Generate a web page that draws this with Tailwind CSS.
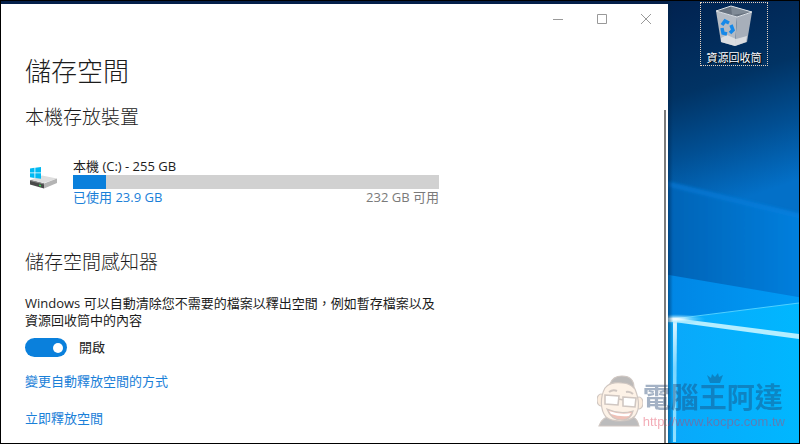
<!DOCTYPE html>
<html lang="zh-Hant">
<head>
  <meta charset="UTF-8">
  <title>儲存空間</title>
  <meta name="viewport" content="width=device-width, initial-scale=1.0"/>
  <script src="https://cdn.jsdelivr.net/npm/@tailwindcss/browser@4"></script>
</head>
<body class="relative flex h-screen overflow-hidden border border-black bg-[#04204a] font-['Open_Sans','Noto_Sans_CJK_TC',sans-serif] text-[13px] leading-[17px] text-[#1c1c1c]">

  <!-- Settings window -->
  <main class="relative mt-[3px] flex-1 overflow-hidden bg-white">
    <!-- Caption buttons -->
    <div class="flex h-[30px] justify-end text-[#999]">
      <button type="button" aria-label="最小化" class="flex w-11 items-center justify-center">
        <svg class="size-3" viewBox="0 0 12 12" fill="none" stroke="currentColor"><path d="M1 6.500h10"/></svg>
      </button>
      <button type="button" aria-label="最大化" class="flex w-11 items-center justify-center">
        <svg class="size-3" viewBox="0 0 12 12" fill="none" stroke="currentColor"><path d="M1.500 1.500h9v9h-9z"/></svg>
      </button>
      <button type="button" aria-label="關閉" class="flex w-11 items-center justify-center">
        <svg class="size-3" viewBox="0 0 12 12" fill="none" stroke="currentColor"><path d="M1 1l10 10M11 1L1 11"/></svg>
      </button>
    </div>

    <div class="px-6">
      <h1 class="mt-[17px] text-[26px] leading-10 font-light">儲存空間</h1>
      <h2 class="mt-3 text-[19px] leading-7 font-light">本機存放裝置</h2>

      <!-- Drive usage -->
      <section class="mt-[27px] flex w-[414px] gap-4">
        <svg class="mt-2 ml-1 h-7 w-7 shrink-0" viewBox="0 0 28 28">
          <path fill="#dedede" d="M1 14L13 9.500 28 12.500 15 17z"/>
          <path fill="#4a4a4a" d="M1 14l14 3.500v5L1 18.500z"/>
          <path fill="#b4b4b4" d="M15 17.500l13-5v4.500L15 22.500z"/>
          <path fill="#8a8a8a" d="M1 14l14 3.500v1L1 15z"/>
          <path fill="#39d353" d="M10 18.500l2 .6v1.400l-2-.6z"/>
          <path fill="#00b9f2" d="M1 2.500l4.500-.7v4.700H1zM6.300 1.700L12 .9v5.600H6.300zM1 7.300h4.500V12L1 11.300zM6.300 7.300H12v5.500l-5.700-.7z"/>
        </svg>
        <div class="flex-1">
          <label for="usage" class="block">本機 (C:) - 255 GB</label>
          <progress id="usage" value="9" max="100" class="block h-3.5 w-full appearance-none [&::-webkit-progress-bar]:bg-[#d1d1d1] [&::-webkit-progress-value]:bg-[#0a80dc]"></progress>
          <div class="flex justify-between">
            <a href="#" class="text-[#1a80d8]">已使用 23.9 GB</a>
            <span class="text-[#7a7a7a]">232 GB 可用</span>
          </div>
        </div>
      </section>

      <!-- Storage sense -->
      <h2 class="mt-[42px] text-[19px] leading-7 font-light">儲存空間感知器</h2>
      <p class="mt-[19px] whitespace-nowrap">Windows 可以自動清除您不需要的檔案以釋出空間，例如暫存檔案以及<br>資源回收筒中的內容</p>
      <label class="mt-[9px] flex items-center gap-3">
        <input type="checkbox" role="switch" checked class="flex h-[19px] w-[42px] appearance-none items-center justify-end rounded-full bg-[#0a80dc] px-1 before:size-2.5 before:rounded-full before:bg-white">
        開啟
      </label>
      <a href="#" class="mt-4 block text-[#1a80d8]">變更自動釋放空間的方式</a>
      <a href="#" class="mt-5 block text-[#1a80d8]">立即釋放空間</a>
    </div>

    <!-- Scrollbar thumb -->
    <div class="absolute top-[106px] right-0.5 bottom-0 w-0.5 bg-[#7c7c7c]"></div>
  </main>

  <!-- Desktop -->
  <aside class="relative w-[131px] overflow-hidden">
    <svg class="absolute inset-0 size-full" viewBox="0 0 131 442" preserveAspectRatio="none">
      <defs>
        <linearGradient id="sky" x1="0" y1="0" x2="0.1" y2="1">
          <stop offset="0" stop-color="#012250"/>
          <stop offset="0.22" stop-color="#013364"/>
          <stop offset="0.36" stop-color="#014f93"/>
          <stop offset="0.5" stop-color="#0370c8"/>
        </linearGradient>
        <linearGradient id="beam" x1="0" y1="0" x2="1" y2="0">
          <stop offset="0" stop-color="#0262b4"/>
          <stop offset="1" stop-color="#0580df"/>
        </linearGradient>
        <linearGradient id="low" x1="0" y1="0" x2="1" y2="0">
          <stop offset="0" stop-color="#0585e4"/>
          <stop offset="1" stop-color="#019cf6"/>
        </linearGradient>
        <linearGradient id="pane" x1="0" y1="0" x2="1" y2="0">
          <stop offset="0" stop-color="#0aa8fa"/>
          <stop offset="1" stop-color="#00b7ff"/>
        </linearGradient>
        <linearGradient id="post" x1="0" y1="0" x2="0" y2="1">
          <stop offset="0" stop-color="#e2f8ff"/>
          <stop offset="0.4" stop-color="#7bd6ff"/>
          <stop offset="1" stop-color="#8fe0ff"/>
        </linearGradient>
        <linearGradient id="edge" x1="0" y1="0" x2="1" y2="0">
          <stop offset="0" stop-color="#002348" stop-opacity="0.5"/>
          <stop offset="1" stop-color="#002348" stop-opacity="0"/>
        </linearGradient>
        <radialGradient id="glow">
          <stop offset="0" stop-color="#fff"/>
          <stop offset="0.3" stop-color="#d8f6ff" stop-opacity="0.8"/>
          <stop offset="1" stop-color="#5cd0ff" stop-opacity="0"/>
        </radialGradient>
        <filter id="soft" x="-20%" y="-20%" width="140%" height="140%"><feGaussianBlur stdDeviation="1.500"/></filter>
        <filter id="fine" x="-20%" y="-20%" width="140%" height="140%"><feGaussianBlur stdDeviation="0.6"/></filter>
      </defs>
      <path fill="url(#sky)" d="M0 0h131v442H0z"/>
      <path fill="url(#beam)" filter="url(#soft)" d="M-5 179L136 214v102H-5z"/>
      <path stroke="#0b80e0" stroke-width="5" opacity="0.45" filter="url(#soft)" d="M-5 182L136 216"/>
      <path fill="url(#low)" filter="url(#fine)" d="M-5 273L136 297v60H-5z"/>
      <path fill="url(#pane)" d="M0 319L131 302v140H0z"/>
      <path stroke="#4fd0ff" filter="url(#fine)" d="M5 318L131 302"/>
      <path fill="#b4eeff" filter="url(#fine)" d="M0 317l6 0L131 333v5L6 321H0z"/>
      <path fill="url(#post)" filter="url(#fine)" d="M5 318h4l-1 123H5z"/>
      <path stroke="#8fe3ff" stroke-width="1.500" filter="url(#fine)" d="M6 440h100"/>
      <ellipse cx="8" cy="318" rx="30" ry="5" fill="url(#glow)"/>
      <path fill="url(#edge)" d="M0 0h5v442H0z"/>
    </svg>

    <!-- Recycle bin -->
    <a href="#" class="relative mt-px ml-8 flex h-16 w-[68px] flex-col items-center justify-between border border-dotted border-[#e8d2bd] pt-0.5 text-[11px] leading-[14px] text-white">
      <svg class="h-[42px] w-10" viewBox="0 0 40 42">
        <path fill="#b4bbc4" d="M2 6l21 6-2 29-14-4z"/>
        <path fill="#a7afba" d="M23 12l15-5-5 30-12 4z"/>
        <path fill="#e2e4e6" d="M7 33l6-3 9 4 11-3-1 6-11 4-14-4z" opacity="0.85"/>
        <path fill="#67727f" d="M2 6L17 1l21 6-15 5z"/>
        <path fill="#808b97" d="M17 1l1 9 20-3z"/>
        <path fill="none" stroke="#dde2e7" d="M2 6L17 1l21 6-15 5z"/>
        <g fill="none" stroke="#1689e8" stroke-width="3.500">
          <path d="M8 20l3-4 4 2"/>
          <path d="M17 20l2 5-3 3"/>
          <path d="M13 29l-4-1-1-5"/>
        </g>
      </svg>
      <span class="whitespace-nowrap [text-shadow:1px_1px_1px_#000]">資源回收筒</span>
    </a>
  </aside>

  <!-- Site watermark -->
  <div class="pointer-events-none absolute right-3.5 bottom-3 flex items-end opacity-40">
    <svg class="mb-1 h-[52px] w-[46px]" viewBox="0 0 46 52">
      <g stroke="#8b7568" stroke-width="1.200">
        <path fill="#5a5a5c" d="M2 51c2-7 8-10 15-10h14c7 0 10 4 11 10z"/>
        <ellipse cx="4" cy="25" rx="4" ry="6" fill="#f8d3ae"/>
        <ellipse cx="42" cy="28" rx="4" ry="6" fill="#f8d3ae"/>
        <path fill="#fce0c4" d="M8 13C14 5 33 5 38 14c4 10 5 20 0 27-7 7-23 6-29 1C3 35 3 22 8 13z"/>
        <path fill="#5a5452" d="M13 9C15 3 19 1 25 1c7 0 12 3 12 12-4-4-7-5-12-5-5-1-9 0-12 1z"/>
        <path fill="#fff" stroke-width="1.600" d="M8 20l14 1-1 9-13-1zM26 22l13 1-1 9-12-1zM22 24l4 1"/>
        <path fill="none" stroke-width="2" d="M12 17q4-3 8-1M29 17q4-1 7 2"/>
        <path fill="#d9664e" d="M10 34q13 6 26 2-2 9-11 9-11 0-15-11z"/>
        <path fill="#fff" stroke="none" d="M12 36q11 4 22 2l-2 3q-10 1-18-2z"/>
      </g>
    </svg>
    <div class="relative">
      <svg class="absolute -top-2 left-16 h-2.5 w-4" viewBox="0 0 16 10"><path fill="#17456f" d="M0 2l4 3 1-4 3 3 3-4 1 4 4-2-3 8H3z"/></svg>
      <div class="text-[28px] leading-8 font-bold text-[#1d426f]">電腦王阿達</div>
      <div class="font-['Liberation_Sans',sans-serif] text-[13px] leading-[18px] text-[#e0304a]">http://www.kocpc.com.tw</div>
    </div>
  </div>
</body>
</html>
